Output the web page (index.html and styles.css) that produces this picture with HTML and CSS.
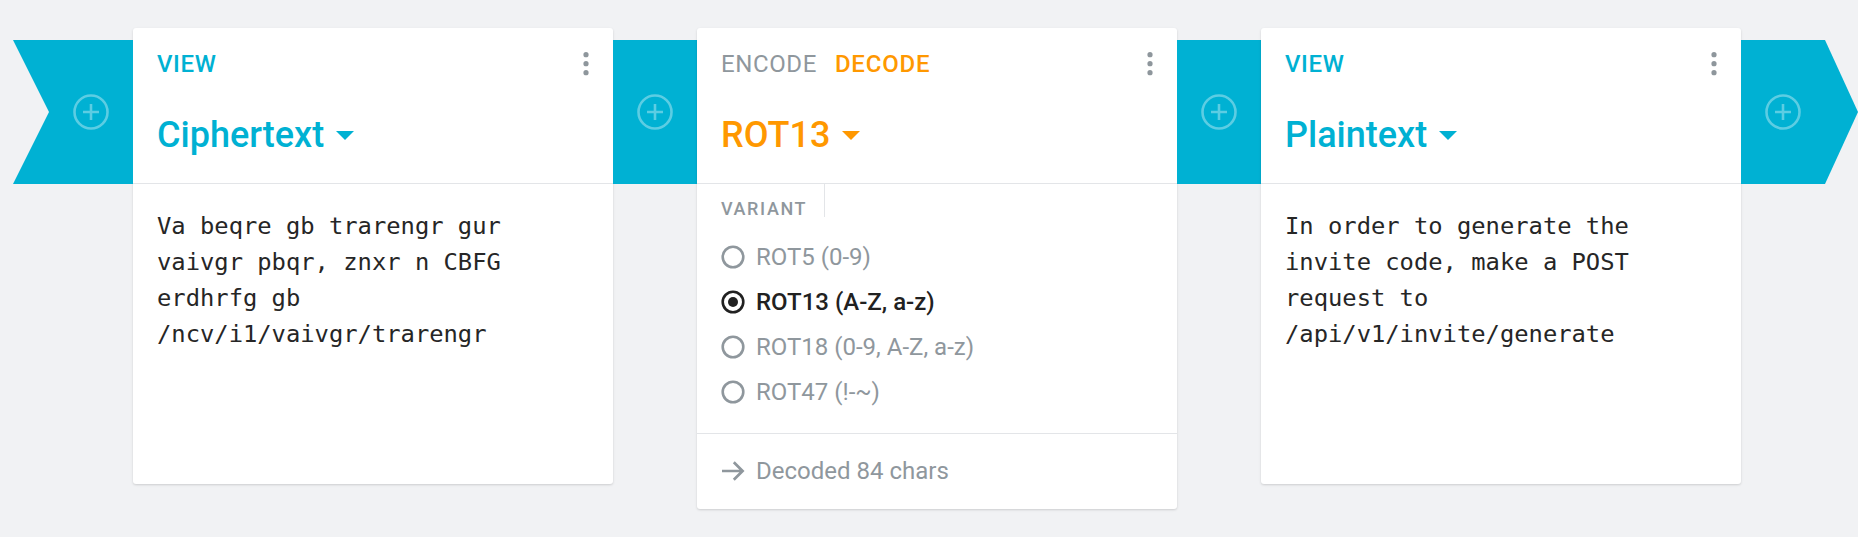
FILE: index.html
```html
<!DOCTYPE html>
<html lang="en">
<head>
<meta charset="utf-8">
<title>Recipe pipeline</title>
<link rel="stylesheet" href="styles.css">
</head>
<body>
<div class="pipeline">
  <div class="band cap-left">
    <svg class="add" width="38" height="38" viewBox="0 0 38 38"><circle cx="19" cy="19" r="16.5"/><path d="M19 11V27M11 19H27"/></svg>
  </div>

  <section class="card">
    <header class="card-head">
      <div class="head-top">
        <span class="label label-view">View</span>
        <svg class="kebab" width="6" height="28" viewBox="0 0 6 28"><circle cx="3" cy="4.7" r="2.6"/><circle cx="3" cy="13.7" r="2.6"/><circle cx="3" cy="22.7" r="2.6"/></svg>
      </div>
      <div class="title title-view">Ciphertext<svg class="caret" width="18" height="9" viewBox="0 0 18 9"><path d="M0 0H18L9 9Z"/></svg></div>
    </header>
    <div class="card-text">Va beqre gb trarengr gur vaivgr pbqr, znxr n CBFG erdhrfg gb /ncv/i1/vaivgr/trarengr</div>
  </section>

  <div class="band connector">
    <svg class="add" width="38" height="38" viewBox="0 0 38 38"><circle cx="19" cy="19" r="16.5"/><path d="M19 11V27M11 19H27"/></svg>
  </div>

  <section class="card">
    <header class="card-head">
      <div class="head-top">
        <span class="label label-muted">Encode</span>
        <span class="label label-active">Decode</span>
        <svg class="kebab" width="6" height="28" viewBox="0 0 6 28"><circle cx="3" cy="4.7" r="2.6"/><circle cx="3" cy="13.7" r="2.6"/><circle cx="3" cy="22.7" r="2.6"/></svg>
      </div>
      <div class="title title-rot">ROT13<svg class="caret" width="18" height="9" viewBox="0 0 18 9"><path d="M0 0H18L9 9Z"/></svg></div>
    </header>
    <div class="variant">
      <div class="variant-label">Variant</div>
      <ul class="radios">
        <li class="radio"><svg width="24" height="24" viewBox="0 0 24 24"><circle cx="12" cy="12" r="10.3"/></svg><span>ROT5 (0-9)</span></li>
        <li class="radio checked"><svg width="24" height="24" viewBox="0 0 24 24"><circle cx="12" cy="12" r="10.3"/><circle class="dot" cx="12" cy="12" r="5"/></svg><span>ROT13 (A-Z, a-z)</span></li>
        <li class="radio"><svg width="24" height="24" viewBox="0 0 24 24"><circle cx="12" cy="12" r="10.3"/></svg><span>ROT18 (0-9, A-Z, a-z)</span></li>
        <li class="radio"><svg width="24" height="24" viewBox="0 0 24 24"><circle cx="12" cy="12" r="10.3"/></svg><span>ROT47 (!-~)</span></li>
      </ul>
    </div>
    <footer class="card-foot">
      <svg class="arrow" width="24" height="24" viewBox="0 0 24 24"><path d="M1 12H21M12.8 3.2L21.6 12L12.8 20.8"/></svg>
      <span>Decoded 84 chars</span>
    </footer>
  </section>

  <div class="band connector">
    <svg class="add" width="38" height="38" viewBox="0 0 38 38"><circle cx="19" cy="19" r="16.5"/><path d="M19 11V27M11 19H27"/></svg>
  </div>

  <section class="card">
    <header class="card-head">
      <div class="head-top">
        <span class="label label-view">View</span>
        <svg class="kebab" width="6" height="28" viewBox="0 0 6 28"><circle cx="3" cy="4.7" r="2.6"/><circle cx="3" cy="13.7" r="2.6"/><circle cx="3" cy="22.7" r="2.6"/></svg>
      </div>
      <div class="title title-view">Plaintext<svg class="caret" width="18" height="9" viewBox="0 0 18 9"><path d="M0 0H18L9 9Z"/></svg></div>
    </header>
    <div class="card-text">In order to generate the invite code, make a POST request to /api/v1/invite/generate</div>
  </section>

  <div class="band cap-right">
    <svg class="add" width="38" height="38" viewBox="0 0 38 38"><circle cx="19" cy="19" r="16.5"/><path d="M19 11V27M11 19H27"/></svg>
  </div>
</div>
</body>
</html>
```

FILE: styles.css
```css
html, body {
  margin: 0;
  padding: 0;
  overflow: hidden;
}

body {
  background: #f1f2f4;
  font-family: Roboto, "Noto Sans", "Liberation Sans", sans-serif;
  width: 1858px;
  height: 537px;
}

.pipeline {
  display: flex;
  align-items: flex-start;
  padding: 28px 0 0 13px;
}

.band {
  flex-shrink: 0;
  height: 144px;
  margin-top: 12px;
  background: #00b1d3;
  display: flex;
  align-items: center;
  justify-content: center;
  box-sizing: border-box;
}

.cap-left {
  width: 120px;
  padding-left: 36px;
  clip-path: polygon(0 0, 100% 0, 100% 100%, 0 100%, 36px 50%);
}

.connector {
  width: 84px;
}

.cap-right {
  width: 117px;
  padding-right: 33px;
  clip-path: polygon(0 0, 84px 0, 100% 50%, 84px 100%, 0 100%);
}

.add circle,
.add path {
  fill: none;
  stroke: rgba(255, 255, 255, 0.36);
  stroke-width: 2.6;
}

.card {
  flex-shrink: 0;
  width: 480px;
  background: #fff;
  border-radius: 3px;
  box-shadow: 0 1px 3px rgba(0, 0, 0, 0.10), 0 1px 2px rgba(0, 0, 0, 0.06);
}

.card-head {
  height: 156px;
  box-sizing: border-box;
  padding: 22px 24px 0 24px;
  border-bottom: 1px solid #e3e5e8;
}

.head-top {
  display: flex;
  align-items: flex-start;
  height: 28px;
}

.label {
  font-size: 24px;
  line-height: 28px;
  font-weight: 500;
  letter-spacing: 0.6px;
  text-transform: uppercase;
  margin-right: 17px;
}

.label-view { color: #00b1d3; }
.label-muted { color: #8f979d; font-weight: 400; letter-spacing: 0.6px; margin-right: 18px; }
.label-active { color: #ff9800; letter-spacing: 0.8px; }

.kebab {
  margin-left: auto;
}

.kebab circle {
  fill: #8e969c;
}

.title {
  display: flex;
  align-items: center;
  margin-top: 35.6px;
  height: 42px;
  font-size: 36px;
  line-height: 42px;
  font-weight: 500;
}

.title-view { color: #00b1d3; }
.title-rot { color: #ff9800; }

.caret {
  margin-left: 12px;
  margin-top: 1px;
}

.title-view .caret path { fill: #00b1d3; }
.title-rot .caret path { fill: #ff9800; }

.card-text {
  min-height: 300px;
  box-sizing: border-box;
  padding: 24px;
  font-family: "DejaVu Sans Mono", "Liberation Mono", monospace;
  font-size: 23.8px;
  line-height: 36px;
  color: #262626;
}

.variant {
  border-bottom: 1px solid #e3e5e8;
}

.variant-label {
  display: inline-block;
  vertical-align: top;
  height: 33px;
  box-sizing: border-box;
  padding: 15px 17px 0 24px;
  border-right: 1px solid #e3e5e8;
  font-size: 18px;
  line-height: 19px;
  letter-spacing: 1.6px;
  font-weight: 500;
  color: #8f979d;
  text-transform: uppercase;
}

.radios {
  list-style: none;
  margin: 0;
  padding: 17px 0 18.7px 24px;
}

.radio {
  display: flex;
  align-items: center;
  height: 45px;
  font-size: 24px;
  color: #8f979d;
}

.radio svg {
  flex-shrink: 0;
  margin-right: 11px;
}

.radio svg circle {
  fill: none;
  stroke: #8f979d;
  stroke-width: 2.6;
}

.radio.checked {
  color: #212121;
  font-weight: 500;
}

.radio.checked svg circle {
  stroke: #212121;
}

.radio.checked svg .dot {
  fill: #212121;
  stroke: none;
}

.card-foot {
  height: 75px;
  box-sizing: border-box;
  display: flex;
  align-items: center;
  padding-left: 24px;
  font-size: 24px;
  color: #8f979d;
}

.arrow {
  margin-right: 11px;
}

.arrow path {
  fill: none;
  stroke: #8f979d;
  stroke-width: 2.7;
}
```
